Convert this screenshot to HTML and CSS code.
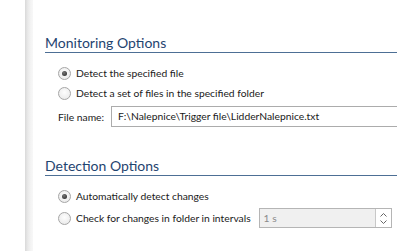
FILE: index.html
```html
<!DOCTYPE html>
<html lang="en">
<head>
    <meta charset="UTF-8">
    <title>Options</title>
    <link rel="stylesheet" href="styles.css">
</head>
<body>
    <div class="page">
        <div class="gutter"></div>
        <div class="strip"></div>
        <div class="content">
            <h2 class="section-title">Monitoring Options</h2>
            <div class="options">
                <div class="option">
                    <span class="radio checked"></span>
                    <span>Detect the specified file</span>
                </div>
                <div class="option">
                    <span class="radio"></span>
                    <span>Detect a set of files in the specified folder</span>
                </div>
                <div class="file-row">
                    <label class="file-label">File name:</label>
                    <div class="textbox">F:\Nalepnice\Trigger file\LidderNalepnice.txt</div>
                </div>
            </div>

            <h2 class="section-title second">Detection Options</h2>
            <div class="options">
                <div class="option">
                    <span class="radio checked"></span>
                    <span>Automatically detect changes</span>
                </div>
                <div class="option interval">
                    <span class="radio"></span>
                    <span>Check for changes in folder in intervals</span>
                    <div class="spinner">
                        <div class="spinner-value">1 s</div>
                        <div class="spinner-buttons">
                            <svg width="7" height="4" viewBox="0 0 7 4"><path d="M0.5 3.5 L3.5 0.5 L6.5 3.5" fill="none" stroke="#666" stroke-width="1"/></svg>
                            <svg width="7" height="4" viewBox="0 0 7 4"><path d="M0.5 0.5 L3.5 3.5 L6.5 0.5" fill="none" stroke="#666" stroke-width="1"/></svg>
                        </div>
                    </div>
                </div>
            </div>
        </div>
    </div>
</body>
</html>
```

FILE: styles.css
```css
body {
    margin: 0;
    background: #fff;
    font-family: Lato, "Noto Sans", sans-serif;
    font-size: 10.3px;
    color: #1a1a1a;
    overflow: hidden;
    white-space: nowrap;
}
.page {
    display: flex;
    height: 251px;
    overflow: hidden;
}
.gutter {
    width: 25px;
    flex-shrink: 0;
}
.strip {
    width: 8px;
    flex-shrink: 0;
    background: linear-gradient(to right, #d9d9d9, #e9e9e9 35%, #f3f3f3 70%, #f8f8f8);
}
.content {
    flex: 1;
    padding-top: 34px;
    padding-left: 12px;
    min-width: 0;
    overflow: hidden;
}
.section-title {
    margin: 0;
    height: 18px;
    line-height: 18px;
    font-size: 14px;
    font-weight: normal;
    color: #1f4470;
    border-bottom: 1px solid #4d6f95;
}
.section-title.second {
    margin-top: 30px;
}
.options {
    padding-left: 13px;
    margin-top: 10px;
}
.option {
    display: flex;
    align-items: center;
    height: 20px;
    gap: 5px;
}
.radio {
    width: 11px;
    height: 11px;
    border: 1px solid #a6a6a6;
    border-radius: 50%;
    background: radial-gradient(circle at 50% 40%, #fdfdfd, #e6e6e6);
    flex-shrink: 0;
    position: relative;
}
.radio.checked::after {
    content: "";
    position: absolute;
    left: 3px;
    top: 3px;
    width: 5px;
    height: 5px;
    border-radius: 50%;
    background: radial-gradient(circle at 40% 35%, #777, #222);
}
.file-row {
    display: flex;
    align-items: center;
    margin-top: 3px;
}
.file-label {
    width: 53px;
    flex-shrink: 0;
}
.textbox {
    flex: 1;
    height: 19px;
    line-height: 19px;
    border: 1px solid #acacac;
    border-right: none;
    padding-left: 6px;
    overflow: hidden;
}
.interval {
    margin-top: 2px;
}
.spinner {
    display: flex;
    margin-left: 3px;
    width: 131px;
    height: 18px;
    border: 1px solid #b5b5b5;
    flex-shrink: 0;
}
.spinner-value {
    flex: 1;
    background: #f0f0f0;
    color: #8a8a8a;
    padding-left: 4px;
    line-height: 18px;
}
.spinner-buttons {
    width: 15px;
    border-left: 1px solid #c8c8c8;
    display: flex;
    flex-direction: column;
    align-items: center;
    justify-content: center;
    gap: 3px;
}
```
